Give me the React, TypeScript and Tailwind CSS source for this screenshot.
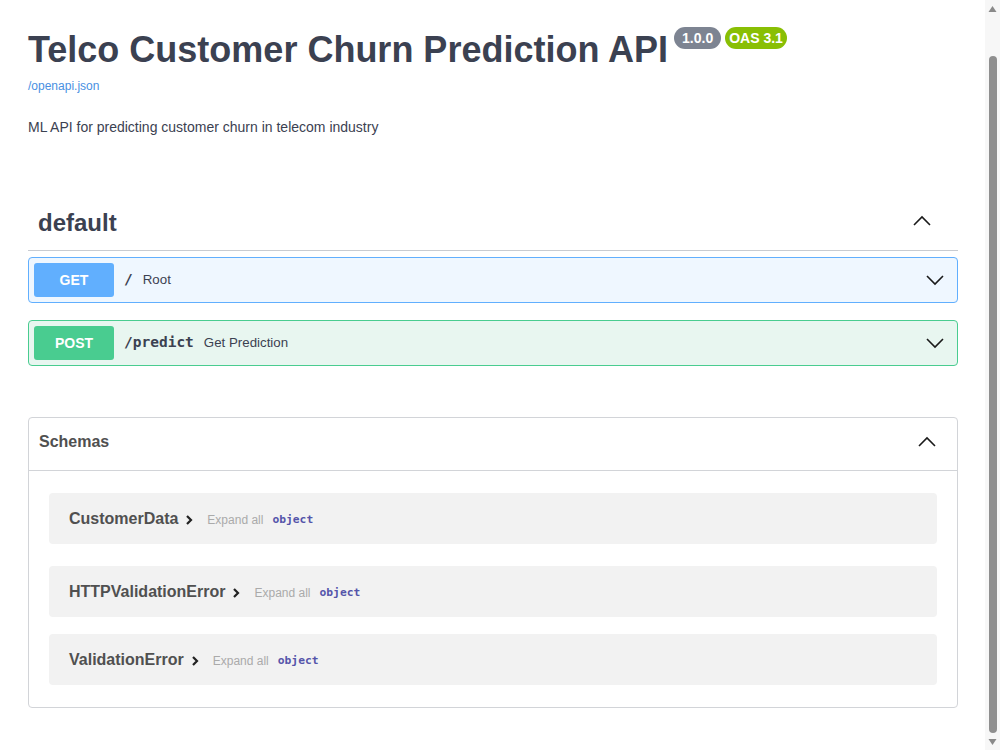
import React from "react";

const sans = "font-['Liberation_Sans',Arial,sans-serif]";
const mono = "font-['DejaVu_Sans_Mono',monospace]";

const Chevron = ({ up = false, className = "" }: { up?: boolean; className?: string }) => (
  <svg width="20" height="20" viewBox="0 0 20 20" className={className}>
    <polyline
      points={up ? "2,14 10,6 18,14" : "2,6 10,14 18,6"}
      fill="none"
      stroke="#1a1a1a"
      strokeWidth="1.6"
      strokeLinejoin="miter"
    />
  </svg>
);

const OpBlock = ({
  method,
  path,
  summary,
  border,
  bg,
  badge,
}: {
  method: string;
  path: string;
  summary: string;
  border: string;
  bg: string;
  badge: string;
}) => (
  <div className={`flex items-center h-[46px] rounded border ${border} ${bg} pl-[5px] pr-[12px]`}>
    <span
      className={`w-[80px] h-[34px] flex items-center justify-center rounded-[3px] ${badge} text-white font-bold text-[14px]`}
    >
      {method}
    </span>
    <span className={`${mono} font-bold text-[14.5px] text-[#3b4151] ml-[10px]`}>{path}</span>
    <span className="text-[13.3px] text-[#3b4151] ml-[10px]">{summary}</span>
    <Chevron className="ml-auto" />
  </div>
);

const SchemaRow = ({ name, mb }: { name: string; mb: string }) => (
  <div className={`flex items-center h-[51px] rounded bg-[#f2f2f2] pl-[20px] ${mb}`}>
    <span className="text-[16px] font-bold text-[#505050]">{name}</span>
    <svg width="8" height="12" viewBox="0 0 8 12" className="ml-[7px] mt-[2px]">
      <polyline points="2,2 6,6 2,10" fill="none" stroke="#222" strokeWidth="2.2" />
    </svg>
    <span className="text-[12px] text-[#aaaaaa] ml-[14px] mt-[3px]">Expand all</span>
    <span className={`${mono} font-bold text-[11.3px] text-[#55a] ml-[9px] mt-[4px]`}>object</span>
  </div>
);

export default function App() {
  return (
    <div className={`${sans} flex h-[750px] w-[1000px] overflow-hidden bg-white`}>
      <div className="flex-1 pl-[28px] pr-[27px]">
        {/* Info */}
        <div className="pt-[28px] flex items-start">
          <h1 className="text-[36px] leading-[43px] font-bold text-[#3b4151]">
            Telco Customer Churn Prediction API
          </h1>
          <span className="ml-[6px] -mt-[1px] h-[22px] px-[8px] rounded-full bg-[#7d8492] text-white text-[14px] font-bold flex items-center">
            1.0.0
          </span>
          <span className="ml-[4px] -mt-[1px] h-[22px] px-[4px] rounded-full bg-[#89bf04] text-white text-[14px] font-bold flex items-center">
            OAS 3.1
          </span>
        </div>
        <div className="mt-[7px] text-[12px] leading-[16px] text-[#4990e2]">/openapi.json</div>
        <p className="mt-[24px] text-[14px] leading-[18px] text-[#3b4151]">
          ML API for predicting customer churn in telecom industry
        </p>

        {/* Tag */}
        <div className="mt-[59px] flex items-center h-[56px] border-b border-[#c8cbd1] pl-[10px] pr-[26px]">
          <h3 className="text-[24px] font-bold text-[#3b4151]">default</h3>
          <Chevron up className="ml-auto -mt-[3px]" />
        </div>
        <div className="mt-[6px] flex flex-col gap-[17px]">
          <OpBlock
            method="GET"
            path="/"
            summary="Root"
            border="border-[#61affe]"
            bg="bg-[#eff7ff]"
            badge="bg-[#61affe]"
          />
          <OpBlock
            method="POST"
            path="/predict"
            summary="Get Prediction"
            border="border-[#49cc90]"
            bg="bg-[#e8f6f0]"
            badge="bg-[#49cc90]"
          />
        </div>

        {/* Schemas */}
        <div className="mt-[51px] rounded border border-[#d2d4d8]">
          <div className="flex items-center h-[53px] border-b border-[#d2d4d8] pl-[10px] pr-[20px] pb-[4px]">
            <h4 className="text-[16px] font-bold text-[#505050]">Schemas</h4>
            <Chevron up className="ml-auto" />
          </div>
          <div className="px-[20px] pt-[22px] pb-[22px]">
            <SchemaRow name="CustomerData" mb="mb-[22px]" />
            <SchemaRow name="HTTPValidationError" mb="mb-[17px]" />
            <SchemaRow name="ValidationError" mb="" />
          </div>
        </div>
      </div>

      {/* Scrollbar */}
      <div className="w-[15px] h-full bg-[#f7f7f7] flex flex-col items-center">
        <svg width="9" height="8" viewBox="0 0 9 8" className="mt-[5px]">
          <polygon points="0.5,7 4.5,1 8.5,7" fill="#8a8a8a" />
        </svg>
        <div className="mt-[43px] w-[8px] flex-1 rounded-full bg-[#8f8f8f]" />
        <svg width="9" height="8" viewBox="0 0 9 8" className="mt-[5px] mb-[4px]">
          <polygon points="0.5,1 4.5,7 8.5,1" fill="#8a8a8a" />
        </svg>
      </div>
    </div>
  );
}
